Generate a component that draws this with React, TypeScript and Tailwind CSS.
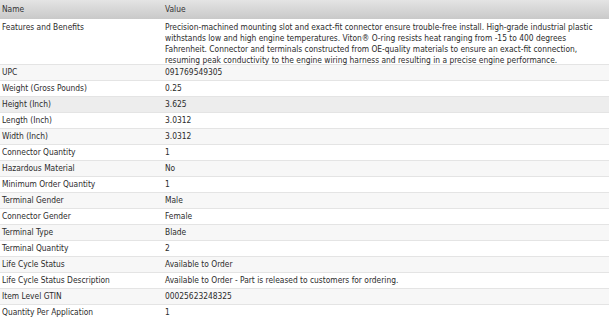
import React from 'react';

type Spec = { name: string; value: string };

const specs: Spec[] = [
  {
    name: 'Features and Benefits',
    value:
      'Precision-machined mounting slot and exact-fit connector ensure trouble-free install. High-grade industrial plastic withstands low and high engine temperatures. Viton® O-ring resists heat ranging from -15 to 400 degrees Fahrenheit. Connector and terminals constructed from OE-quality materials to ensure an exact-fit connection, resuming peak conductivity to the engine wiring harness and resulting in a precise engine performance.',
  },
  { name: 'UPC', value: '091769549305' },
  { name: 'Weight (Gross Pounds)', value: '0.25' },
  { name: 'Height (Inch)', value: '3.625' },
  { name: 'Length (Inch)', value: '3.0312' },
  { name: 'Width (Inch)', value: '3.0312' },
  { name: 'Connector Quantity', value: '1' },
  { name: 'Hazardous Material', value: 'No' },
  { name: 'Minimum Order Quantity', value: '1' },
  { name: 'Terminal Gender', value: 'Male' },
  { name: 'Connector Gender', value: 'Female' },
  { name: 'Terminal Type', value: 'Blade' },
  { name: 'Terminal Quantity', value: '2' },
  { name: 'Life Cycle Status', value: 'Available to Order' },
  { name: 'Life Cycle Status Description', value: 'Available to Order - Part is released to customers for ordering.' },
  { name: 'Item Level GTIN', value: '00025623248325' },
  { name: 'Quantity Per Application', value: '1' },
];

export default function App() {
  return (
    <div
      className="w-[609px] h-[317px] overflow-hidden bg-white text-[#2b2b2b] text-[8.35px]"
      style={{ fontFamily: '"DejaVu Sans Condensed", "DejaVu Sans", sans-serif' }}
    >
      <div className="flex h-[19px] items-center bg-gradient-to-b from-[#e4e4e4] to-[#c9c9c9] text-[#333]">
        <div className="w-[163px] pl-[2px]">Name</div>
        <div className="flex-1 pl-[2px]">Value</div>
      </div>
      {specs.map((s, i) => {
        const multi = i === 0;
        const bg = i === 3 ? 'bg-[#ededed]' : i % 2 === 1 ? 'bg-[#f7f7f7]' : 'bg-white';
        return (
          <div
            key={s.name}
            className={`flex border-b border-[#e4e4e4] ${bg} ${multi ? 'h-[46px] pt-[3px] leading-[11px]' : 'h-[16px] items-center leading-[11px]'}`}
          >
            <div className="w-[163px] shrink-0 pl-[2px] whitespace-nowrap">{s.name}</div>
            <div className="flex-1 pl-[2px] pr-[2px]">{s.value}</div>
          </div>
        );
      })}
    </div>
  );
}
